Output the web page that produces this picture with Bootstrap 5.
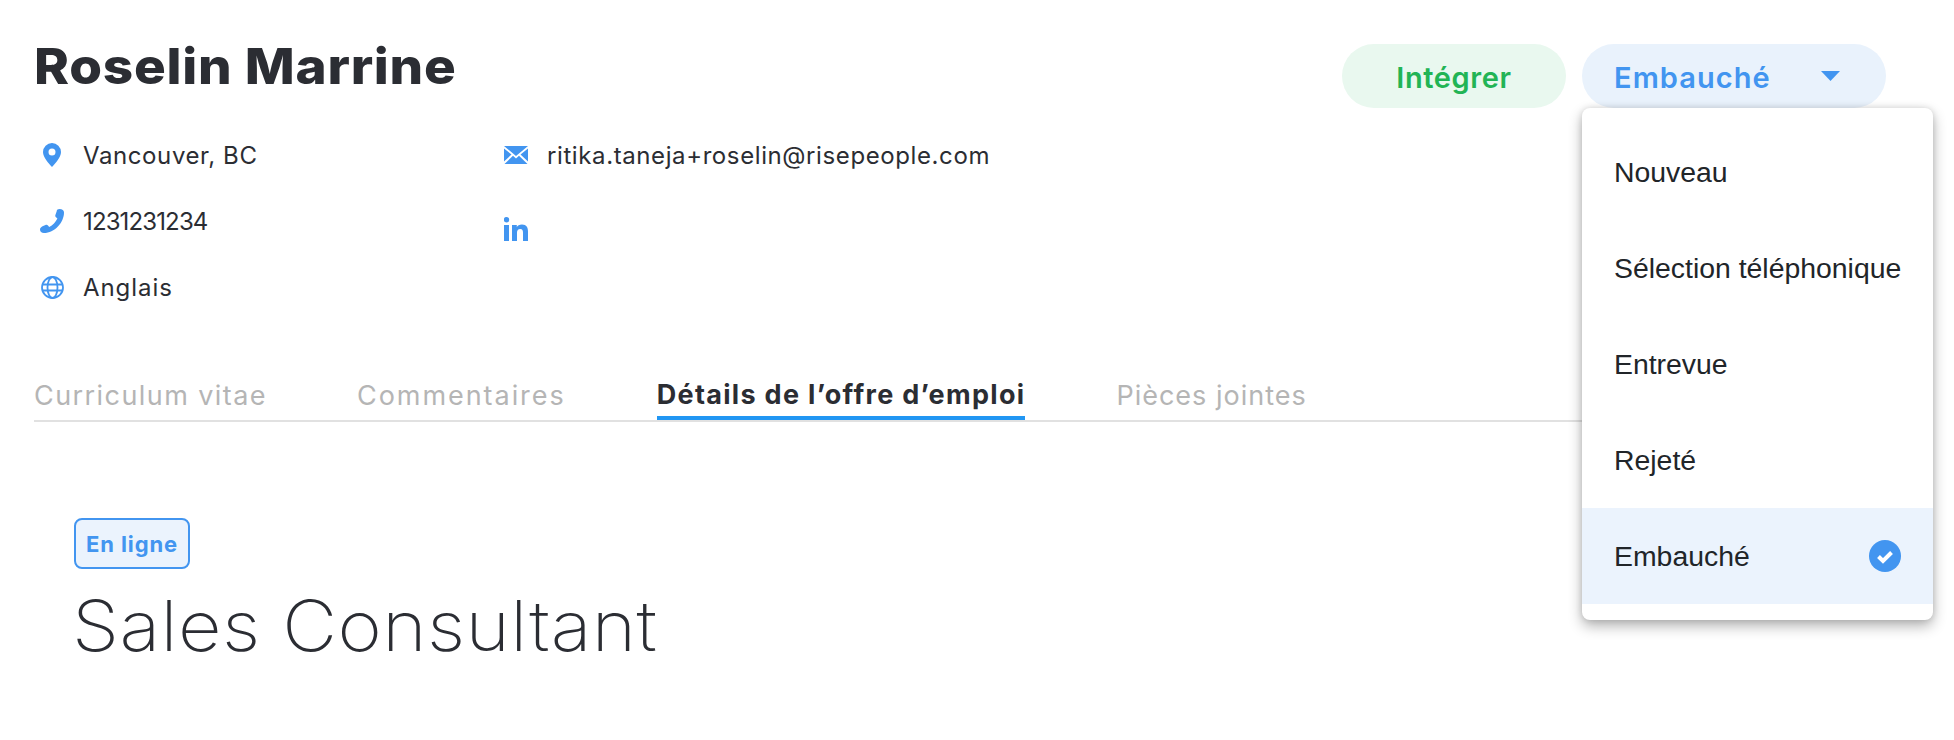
<!doctype html>
<html lang="fr">
<head>
<meta charset="utf-8">
<title>Roselin Marrine</title>
<link href="https://cdn.jsdelivr.net/npm/bootstrap@5.3.0/dist/css/bootstrap.min.css" rel="stylesheet">
<style>
body{background:#fff;color:#2b2d33;font-family:Inter,"Noto Sans",sans-serif;overflow:hidden}
.pg{padding:44px 68px 0 34px}
.hd{height:64px}
.nm{font-size:50px;font-weight:800;line-height:44px;letter-spacing:.7px;margin:0;color:#2b2d33;transform:scaleX(1.06);transform-origin:left center;white-space:nowrap}
.pill{height:64px;border:0;border-radius:32px;font-size:29px;font-weight:600;padding:0;display:flex;align-items:center}
.pill-g{width:224px;background:#e9f8ef;color:#22b455;justify-content:center;letter-spacing:.6px;padding-top:3px}
.pill-b{width:304px;background:#e9f2fc;color:#4295f0;padding:3px 46px 0 32px;justify-content:space-between;letter-spacing:1.07px}
.pill-b svg{margin-top:-3px}
.wrap{position:relative}
.menu{display:block;position:absolute;top:100%;left:0;width:351px;padding:16px 0;margin:0;border:0;border-radius:8px;background:#fff;box-shadow:0 6px 14px rgba(0,0,0,.3),0 0 6px rgba(0,0,0,.12);z-index:5}
.opt{height:96px;padding:0 32px;display:flex;align-items:center;justify-content:space-between;font-family:"Liberation Sans",Arial,sans-serif;font-size:28.4px;color:#212529;white-space:nowrap}
.opt-on{background:#ebf3fd}
.info{margin-top:14px;font-size:24px}
.col1{width:470px}
.ln{height:66px;display:flex;align-items:center}
.ico{width:36px;flex:none;display:flex;justify-content:center}
.txt{padding-top:2px}
.col1 .txt{margin-left:13px}
.sp-a{letter-spacing:.6px}
.sp-b{letter-spacing:-.87px}
.sp-c{letter-spacing:.94px}
.col2 .txt{margin-left:19px;letter-spacing:.6px}
.col2 .ico{width:24px}
.inr{height:43px;margin-top:29px;align-items:flex-start}
.tabs{margin-top:50px;gap:91px;border-bottom:2px solid #e1e1e1;height:52px}
.tb{font-size:27px;line-height:52px;color:#b5b5b5;white-space:nowrap;height:50px;text-decoration:none}
.tb-1{letter-spacing:1.43px}
.tb-2{letter-spacing:1.95px;margin-left:-1px}
.tb-4{letter-spacing:1px}
.tb-on{color:#2b2d33;font-weight:700;letter-spacing:1.31px;border-bottom:4px solid #2196f3;line-height:50px}
.body{padding:96px 0 0 40px}
.tag{display:inline-block;height:51px;width:116px;border:2px solid #4295f0;border-radius:8px;background:#ebf3fd;color:#4295f0;font-size:22px;font-weight:700;line-height:49px;letter-spacing:.9px;text-align:center}
.ttl{font-size:70px;font-weight:200;line-height:84px;margin:15px 0 0 -2px;color:#2b2d33;letter-spacing:.4px;transform:scaleX(1.08);transform-origin:left center;white-space:nowrap}
</style>
</head>
<body>
<div class="pg">
  <div class="hd d-flex justify-content-between">
    <h1 class="nm">Roselin Marrine</h1>
    <div class="d-flex gap-3">
      <button class="pill pill-g" type="button">Intégrer</button>
      <div class="wrap">
        <button class="pill pill-b" type="button">Embauché
          <svg width="19" height="10" viewBox="0 0 19 10"><path d="M0 0h19L9.5 10z" fill="#4295f0"/></svg>
        </button>
        <div class="menu">
          <div class="opt">Nouveau</div>
          <div class="opt">Sélection téléphonique</div>
          <div class="opt">Entrevue</div>
          <div class="opt">Rejeté</div>
          <div class="opt opt-on">Embauché
            <svg width="32" height="32" viewBox="0 0 32 32"><circle cx="16" cy="16" r="16" fill="#4295f0"/><path d="M9.500 16.500l4.500 4.500 8.500-8.500" fill="none" stroke="#fff" stroke-width="4"/></svg>
          </div>
        </div>
      </div>
    </div>
  </div>
  <div class="info d-flex">
    <div class="col1">
      <div class="ln"><span class="ico"><svg width="18" height="24" viewBox="0 0 18 24"><path fill-rule="evenodd" fill="#4295f0" d="M9 0a9 9 0 0 1 9 9c0 5.500-5.500 11-9 15C5.500 20 0 14.500 0 9a9 9 0 0 1 9-9zm0 5.500a3.500 3.500 0 1 0 0 7 3.500 3.500 0 0 0 0-7z"/></svg></span><span class="txt sp-a">Vancouver, BC</span></div>
      <div class="ln"><span class="ico"><svg width="24" height="24" viewBox="0 0 24 24"><path fill="#4295f0" d="M24 3.500c0 10-9.500 20.500-20 20.500C1.500 24 0 22.500 0 20.500c0-1.500 1-2.500 2.500-3.300l3-1.200c1-.4 2-.1 2.700.7l1 1.300c3.500-1.800 6.500-5 8.200-8.500l-1.400-1.200c-.7-.6-.9-1.500-.6-2.300l1.300-3.700C16.700.8 17.900 0 19.500 0 22.300 0 24 1.500 24 3.500z"/></svg></span><span class="txt sp-b">1231231234</span></div>
      <div class="ln"><span class="ico"><svg width="23" height="23" viewBox="0 0 23 23" fill="none" stroke="#4295f0" stroke-width="1.800"><circle cx="11.500" cy="11.500" r="10.500"/><ellipse cx="11.500" cy="11.500" rx="5" ry="10.500"/><path d="M1 8.500h21M1 14.500h21"/></svg></span><span class="txt sp-c">Anglais</span></div>
    </div>
    <div class="col2">
      <div class="ln"><span class="ico"><svg width="24" height="18" viewBox="0 0 24 18"><path fill="#4295f0" d="M0 0h24L12 10zM0 2.500v13l7.500-7zM24 2.500v13l-7.500-7zM9 9.800l3 2.700 3-2.700L23.500 18H.5z"/></svg></span><span class="txt">ritika.taneja+roselin@risepeople.com</span></div>
      <div class="ln inr"><span class="ico"><svg width="24" height="24" viewBox="0 0 24 24"><path fill="#4295f0" d="M0 8h5v16H0zM2.500 0a2.700 2.700 0 1 1 0 5.400 2.700 2.700 0 0 1 0-5.400zM8 8h4.800v2.200C13.600 8.800 15.300 7.600 18 7.600c4.600 0 6 2.900 6 7V24h-5v-8.300c0-2-.6-3.700-2.700-3.700-2.300 0-3.300 1.600-3.300 3.700V24H8z"/></svg></span></div>
    </div>
  </div>
  <nav class="tabs d-flex">
    <a class="tb tb-1" href="#">Curriculum vitae</a>
    <a class="tb tb-2" href="#">Commentaires</a>
    <a class="tb tb-on" href="#">Détails de l’offre d’emploi</a>
    <a class="tb tb-4" href="#">Pièces jointes</a>
  </nav>
  <div class="body">
    <span class="tag">En ligne</span>
    <h2 class="ttl">Sales Consultant</h2>
  </div>
</div>
</body>
</html>
